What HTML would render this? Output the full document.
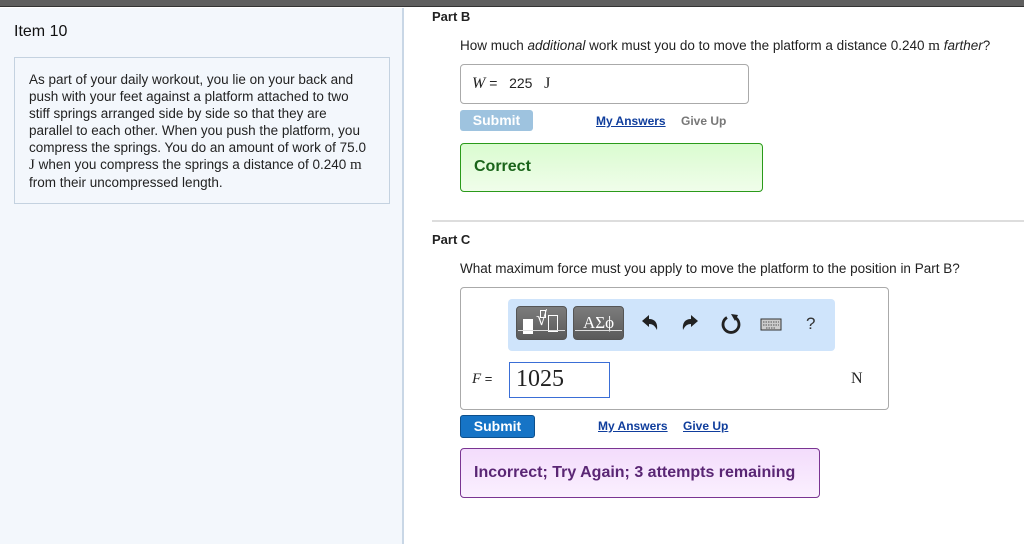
<!DOCTYPE html>
<html><head><meta charset="utf-8"><style>
*{margin:0;padding:0;box-sizing:border-box}
body{width:1024px;height:544px;overflow:hidden;background:#fff;font-family:"Liberation Sans",Arial,sans-serif;position:relative;color:#222}
.a{position:absolute}
.top{left:0;top:0;width:1024px;height:7px;background:#5f5f5f;border-bottom:1px solid #333}
.left{left:0;top:8px;width:404px;height:536px;background:#f3f7fc;border-right:2px solid #c9d7e6}
.btn{border-radius:3px;color:#fff;font-weight:bold;font-size:14px;text-align:center}
.lnk{font-size:12px;font-weight:bold;color:#0f3d9c;text-decoration:underline}
.tb{border:1px solid #555;border-radius:4px;color:#fff;background:linear-gradient(#7c7c7c,#5a5a5a)}
</style></head><body>
<div class="a top"></div>
<div class="a left"></div>
<div class="a" style="left:14px;top:23px;font-size:16px;color:#111">Item 10</div>
<div class="a" style="left:14px;top:57px;width:376px;height:147px;border:1px solid #c4d2e0;background:#f3f7fc"></div>
<div class="a" style="left:29px;top:71px;width:340px;font-size:13.5px;line-height:17px;color:#222">As part of your daily workout, you lie on your back and push with your feet against a platform attached to two stiff springs arranged side by side so that they are parallel to each other. When you push the platform, you compress the springs. You do an amount of work of 75.0 <span style="font-family:'Liberation Serif',serif;font-size:15px">J</span> when you compress the springs a distance of 0.240 <span style="font-family:'Liberation Serif',serif;font-size:15px">m</span> from their uncompressed length.</div>

<div class="a" style="left:432px;top:9px;font-size:13px;font-weight:bold">Part B</div>
<div class="a" style="left:460px;top:38px;font-size:13.5px">How much <i>additional</i> work must you do to move the platform a distance 0.240 <span style="font-family:'Liberation Serif',serif;font-size:15px">m</span> <i>farther</i>?</div>
<div class="a" style="left:460px;top:64px;width:289px;height:40px;border:1px solid #aaa;border-radius:4px"></div>
<div class="a" style="left:472px;top:75px;font-size:14px"><i style="font-family:'Liberation Serif',serif;font-size:16px">W</i> = &nbsp; 225 &nbsp; <span style="font-family:'Liberation Serif',serif;font-size:16px">J</span></div>
<div class="a btn" style="left:460px;top:110px;width:73px;height:21px;background:#9ec3df;line-height:21px">Submit</div>
<div class="a lnk" style="left:596px;top:114px">My Answers</div>
<div class="a" style="left:681px;top:114px;font-size:12px;font-weight:bold;color:#777">Give Up</div>
<div class="a" style="left:460px;top:143px;width:303px;height:49px;border:1px solid #2a9a1a;border-radius:4px;background:linear-gradient(#dafcd0,#f0fdea)"></div>
<div class="a" style="left:474px;top:158px;font-size:16px;font-weight:bold;color:#1a641a">Correct</div>

<div class="a" style="left:432px;top:220px;width:592px;height:2px;background:#ddd"></div>
<div class="a" style="left:432px;top:232px;font-size:13px;font-weight:bold">Part C</div>
<div class="a" style="left:460px;top:261px;font-size:13.5px">What maximum force must you apply to move the platform to the position in Part B?</div>
<div class="a" style="left:460px;top:287px;width:429px;height:123px;border:1px solid #aaa;border-radius:4px"></div>
<div class="a" style="left:508px;top:299px;width:327px;height:52px;background:#cfe4fb;border-radius:4px"></div>
<div class="a tb" style="left:516px;top:306px;width:51px;height:34px"><div class="a" style="left:6px;top:12px;width:10px;height:15px;background:#fff"></div><div class="a" style="left:19px;top:1px;font-family:'Liberation Serif',serif;font-size:20px">√</div><div class="a" style="left:23px;top:3px;width:6px;height:8px;border:1px solid #fff"></div><div class="a" style="left:31px;top:8px;width:10px;height:17px;border:1px solid #fff"></div><div class="a" style="left:1px;top:23px;width:47px;height:1px;background:#ddd"></div></div>
<div class="a tb" style="left:573px;top:306px;width:51px;height:34px;font-family:'Liberation Serif',serif;font-size:17px;text-align:center;line-height:32px">ΑΣϕ<div class="a" style="left:1px;top:23px;width:47px;height:1px;background:#ddd"></div></div>
<svg class="a" style="left:640px;top:313px" width="20" height="20" viewBox="0 0 20 20"><path d="M2 8 L9 2 V6 C15 6 18 10 17 17 C15 13 13 11 9 11 V14 Z" fill="#222"/></svg>
<svg class="a" style="left:680px;top:313px" width="20" height="20" viewBox="0 0 20 20"><path d="M18 8 L11 2 V6 C5 6 2 10 3 17 C5 13 7 11 11 11 V14 Z" fill="#222"/></svg>
<svg class="a" style="left:719px;top:312px" width="24" height="24" viewBox="0 0 24 24"><path d="M16 5.5 A8 8 0 1 1 8 5.5" fill="none" stroke="#222" stroke-width="2.8"/><path d="M12 2 L19 3 L16 9 Z" fill="#222"/></svg>
<svg class="a" style="left:760px;top:318px" width="22" height="14" viewBox="0 0 22 14"><rect x="1" y="1" width="20" height="11" fill="#ccc" stroke="#333"/><path d="M3 4h16M3 7h16M6 10h10" stroke="#555" stroke-dasharray="1.5 1"/></svg>
<div class="a" style="left:806px;top:314px;font-size:17px;color:#333">?</div>
<div class="a" style="left:472px;top:371px;font-size:13px"><i style="font-family:'Liberation Serif',serif;font-size:15px">F</i> =</div>
<div class="a" style="left:509px;top:362px;width:101px;height:36px;border:1px solid #3a6ed6;font-family:'Liberation Serif',serif;font-size:24px;line-height:33px;padding-left:6px">1025</div>
<div class="a" style="left:851px;top:370px;font-family:'Liberation Serif',serif;font-size:16px">N</div>
<div class="a btn" style="left:460px;top:415px;width:75px;height:23px;background:#1674c6;border:1px solid #0c4f8c;line-height:21px">Submit</div>
<div class="a lnk" style="left:598px;top:419px">My Answers</div>
<div class="a lnk" style="left:683px;top:419px">Give Up</div>
<div class="a" style="left:460px;top:448px;width:360px;height:50px;border:1px solid #7a3592;border-radius:4px;background:linear-gradient(#f3dcfc,#fbf0fe)"></div>
<div class="a" style="left:474px;top:464px;font-size:16px;font-weight:bold;color:#5a2674">Incorrect; Try Again; 3 attempts remaining</div>
</body></html>
